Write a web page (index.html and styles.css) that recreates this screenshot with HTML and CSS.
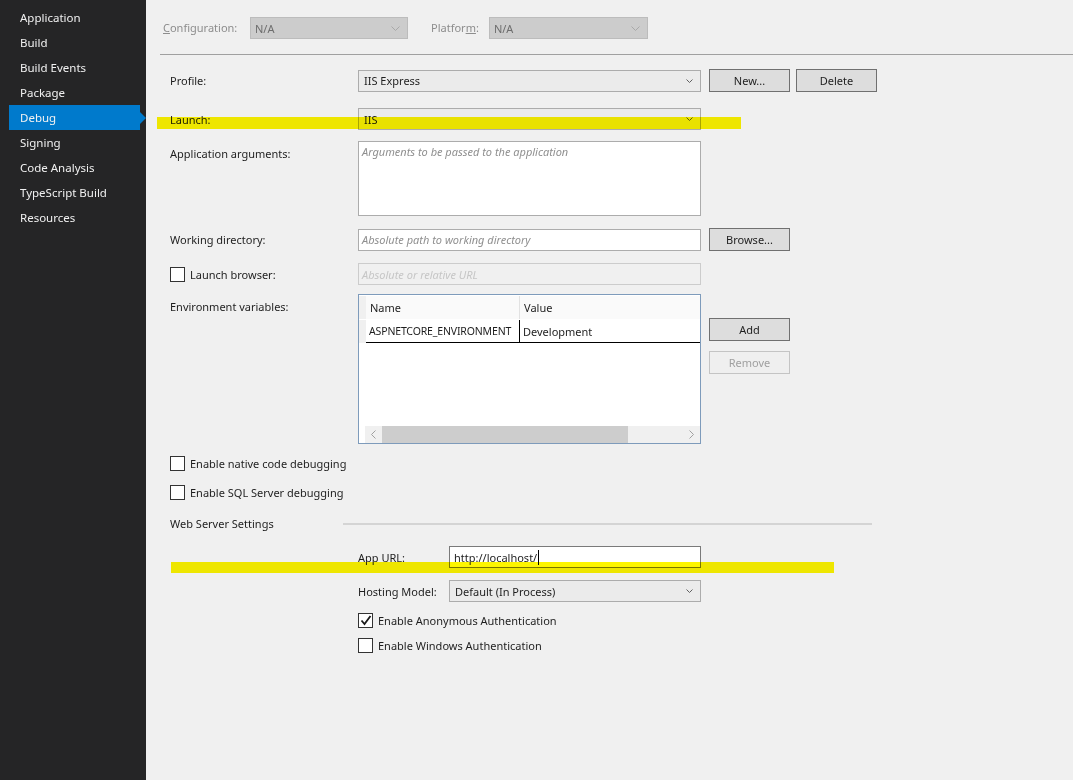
FILE: index.html
```html
<!DOCTYPE html>
<html lang="en">
<head>
  <meta charset="UTF-8" />
  <title>Project Properties - Debug</title>
  <link rel="stylesheet" href="styles.css">
</head>
<body>
  <div class="app">
    <nav class="sidebar">
      <div class="nav-item">Application</div>
      <div class="nav-item">Build</div>
      <div class="nav-item">Build Events</div>
      <div class="nav-item">Package</div>
      <div class="nav-item active">Debug</div>
      <div class="nav-item">Signing</div>
      <div class="nav-item">Code Analysis</div>
      <div class="nav-item">TypeScript Build</div>
      <div class="nav-item">Resources</div>
    </nav>

    <main class="page">
      <div class="config-bar">
        <span class="bar-label"><u>C</u>onfiguration:</span>
        <div class="combo combo-disabled combo-config">
          <span>N/A</span>
          <svg class="chev chev-big" width="9" height="5" viewBox="0 0 9 5"><path d="M0.5 0.5 L4.5 4.5 L8.5 0.5" /></svg>
        </div>
        <span class="bar-label bar-label-platform">Platfor<u>m</u>:</span>
        <div class="combo combo-disabled combo-platform">
          <span>N/A</span>
          <svg class="chev chev-big" width="9" height="5" viewBox="0 0 9 5"><path d="M0.5 0.5 L4.5 4.5 L8.5 0.5" /></svg>
        </div>
      </div>

      <div class="form">
        <div class="row row-profile">
          <label class="lbl">Profile:</label>
          <div class="combo ctl">
            <span>IIS Express</span>
            <svg class="chev" width="7" height="4" viewBox="0 0 7 4"><path d="M0.5 0.5 L3.5 3.5 L6.5 0.5" /></svg>
          </div>
          <button class="btn btn-first">New...</button>
          <button class="btn btn-second">Delete</button>
        </div>

        <div class="row row-launch">
          <label class="lbl">Launch:</label>
          <div class="combo ctl">
            <span>IIS</span>
            <svg class="chev" width="7" height="4" viewBox="0 0 7 4"><path d="M0.5 0.5 L3.5 3.5 L6.5 0.5" /></svg>
          </div>
        </div>

        <div class="row row-args">
          <label class="lbl">Application arguments:</label>
          <div class="textbox ctl textarea"><span class="hint">Arguments to be passed to the application</span></div>
        </div>

        <div class="row row-workdir">
          <label class="lbl">Working directory:</label>
          <div class="textbox ctl"><span class="hint">Absolute path to working directory</span></div>
          <button class="btn btn-first">Browse...</button>
        </div>

        <div class="row row-browser">
          <label class="lbl check-lbl"><span class="box"></span>Launch browser:</label>
          <div class="textbox ctl textbox-disabled"><span class="hint">Absolute or relative URL</span></div>
        </div>

        <div class="row row-env">
          <label class="lbl lbl-top">Environment variables:</label>
          <div class="grid ctl">
            <div class="grid-head">
              <span class="rh"></span>
              <span class="gcell gname">Name</span>
              <span class="gcell gvalue">Value</span>
            </div>
            <div class="grid-row">
              <span class="rh"></span>
              <span class="gcell gname">ASPNETCORE_ENVIRONMENT</span>
              <span class="gcell gvalue">Development</span>
            </div>
            <div class="grid-fill"></div>
            <div class="hscroll">
              <span class="sb-btn"><svg width="5" height="9" viewBox="0 0 5 9"><path d="M4.5 0.5 L0.5 4.5 L4.5 8.5" /></svg></span>
              <span class="sb-thumb"></span>
              <span class="sb-track"></span>
              <span class="sb-btn"><svg width="5" height="9" viewBox="0 0 5 9"><path d="M0.5 0.5 L4.5 4.5 L0.5 8.5" /></svg></span>
            </div>
          </div>
          <div class="env-buttons">
            <button class="btn">Add</button>
            <button class="btn btn-disabled">Remove</button>
          </div>
        </div>

        <div class="row row-check row-native">
          <label class="check-lbl"><span class="box"></span>Enable native code debugging</label>
        </div>
        <div class="row row-check row-sql">
          <label class="check-lbl"><span class="box"></span>Enable SQL Server debugging</label>
        </div>

        <div class="row row-section">
          <span class="section-title">Web Server Settings</span>
          <span class="section-line"></span>
        </div>

        <div class="row sub-row row-url">
          <label class="sub-lbl">App URL:</label>
          <div class="textbox sub-ctl textbox-focus"><span class="value">http://localhost/</span><span class="caret"></span></div>
        </div>

        <div class="row sub-row row-hosting">
          <label class="sub-lbl">Hosting Model:</label>
          <div class="combo sub-ctl">
            <span>Default (In Process)</span>
            <svg class="chev" width="7" height="4" viewBox="0 0 7 4"><path d="M0.5 0.5 L3.5 3.5 L6.5 0.5" /></svg>
          </div>
        </div>

        <div class="row sub-row row-check row-anon">
          <label class="check-lbl"><span class="box checked"><svg width="12" height="11" viewBox="0 0 12 11"><path d="M1.5 5.5 L4.5 9 L10.5 1" /></svg></span>Enable Anonymous Authentication</label>
        </div>
        <div class="row sub-row row-check row-win">
          <label class="check-lbl"><span class="box"></span>Enable Windows Authentication</label>
        </div>
      </div>

      <!-- highlighter marks -->
      <div class="marker marker-launch"></div>
      <div class="marker marker-url"></div>
    </main>
  </div>
</body>
</html>
```

FILE: styles.css
```css
html, body {
  margin: 0;
  padding: 0;
  height: 100%;
}

body {
  font-family: "Noto Sans", "Open Sans", sans-serif;
  font-size: 11px;
  color: #1e1e1e;
  background: #f0f0f0;
}

.app {
  display: flex;
  height: 100vh;
}

/* left navigation */
.sidebar {
  width: 146px;
  flex-shrink: 0;
  background: #252526;
  padding-top: 5px;
  box-sizing: border-box;
  font-size: 11.5px;
}

.nav-item {
  position: relative;
  height: 25px;
  line-height: 25px;
  margin-left: 9px;
  width: 131px;
  padding-left: 11px;
  box-sizing: border-box;
  color: #f1f1f1;
  white-space: nowrap;
}

.nav-item.active {
  background: #007acc;
}

.nav-item.active::after {
  content: "";
  position: absolute;
  right: -6px;
  top: 7px;
  border-left: 6px solid #007acc;
  border-top: 6px solid transparent;
  border-bottom: 6px solid transparent;
}

/* main page */
.page {
  position: relative;
  flex: 1;
  background: #f0f0f0;
}

.config-bar {
  display: flex;
  height: 55px;
  margin-left: 14px;
  padding: 17px 0 0 3px;
  border-bottom: 1px solid #a0a0a0;
  box-sizing: border-box;
  align-items: flex-start;
}

.bar-label {
  color: #8d8d8d;
  width: 87px;
  line-height: 22px;
}

.bar-label-platform {
  width: auto;
  margin-left: 23px;
  margin-right: 10px;
}

.combo {
  display: flex;
  align-items: center;
  justify-content: space-between;
  height: 22px;
  box-sizing: border-box;
  border: 1px solid #acacac;
  background: #ebebeb;
  padding: 0 7px 0 5px;
}

.combo-disabled {
  background: #cccccc;
  border-color: #bcbcbc;
  color: #6d6d6d;
  padding-left: 4px;
}

.combo-config { width: 158px; }
.combo-platform { width: 159px; }

.chev {
  fill: none;
  stroke: #606060;
  stroke-width: 1;
}

.chev-big {
  stroke: #a8a8a8;
}

/* form rows */
.form {
  padding-left: 24px;
}

.row {
  display: flex;
  align-items: center;
}

.lbl {
  width: 188px;
  flex-shrink: 0;
}

.lbl-top {
  align-self: flex-start;
  padding-top: 5px;
}

.ctl {
  width: 343px;
  flex-shrink: 0;
}

.row-profile { margin-top: 14px; }
.row-launch { margin-top: 16px; }
.row-args { margin-top: 11px; align-items: flex-start; }
.row-args .lbl { padding-top: 5px; }
.row-workdir { margin-top: 12px; }
.row-browser { margin-top: 12px; }
.row-env { margin-top: 9px; align-items: flex-start; }
.row-native { margin-top: 8px; }
.row-sql { margin-top: 7px; }
.row-section { margin-top: 13px; }
.row-url { margin-top: 15px; }
.row-hosting { margin-top: 12px; }
.row-anon { margin-top: 7px; }
.row-win { margin-top: 3px; }

.row-check {
  height: 22px;
}

.btn {
  width: 81px;
  height: 23px;
  font: inherit;
  color: #1e1e1e;
  background: #dddddd;
  border: 1px solid #707070;
  padding: 0;
}

.btn-first { margin-left: 8px; }
.btn-second { margin-left: 6px; }

.btn-disabled {
  background: #efefef;
  border-color: #c4c4c4;
  color: #a0a0a0;
}

.textbox {
  height: 22px;
  box-sizing: border-box;
  border: 1px solid #acacac;
  background: #ffffff;
  padding: 0 3px;
  display: flex;
  align-items: center;
}

.textarea {
  height: 75px;
  align-items: flex-start;
  padding-top: 2px;
}

.hint {
  font-style: italic;
  color: #8f8f8f;
}

.textbox-disabled {
  background: #f0f0f0;
  border-color: #cccccc;
}

.textbox-disabled .hint {
  color: #c6c6c6;
}

.textbox-focus {
  border-color: #7a7a7a;
  padding-left: 4px;
}

.caret {
  display: inline-block;
  width: 1px;
  height: 15px;
  background: #000000;
  margin-left: 1px;
}

/* checkboxes */
.check-lbl {
  display: flex;
  align-items: center;
  white-space: nowrap;
}

.box {
  width: 13px;
  height: 13px;
  border: 1px solid #333333;
  background: #ffffff;
  margin-right: 5px;
  display: flex;
  align-items: center;
  justify-content: center;
}

.box svg {
  fill: none;
  stroke: #1a1a1a;
  stroke-width: 1.8;
}

/* environment variables grid */
.grid {
  height: 150px;
  box-sizing: border-box;
  border: 1px solid #7e9bbb;
  background: #ffffff;
  display: flex;
  flex-direction: column;
  padding-top: 1px;
}

.grid-head,
.grid-row {
  display: flex;
  height: 23px;
}

.grid-head {
  background: #fafafa;
}

.rh {
  width: 7px;
  flex-shrink: 0;
  background: #f0f0f0;
}

.gcell {
  display: flex;
  align-items: center;
  box-sizing: border-box;
  white-space: nowrap;
}

.gname {
  width: 153px;
  flex-shrink: 0;
  padding-left: 4px;
}

.gvalue {
  flex: 1;
  padding-left: 4px;
}

.grid-head .gvalue {
  border-left: 1px solid #e2e2e2;
}

.grid-row {
  margin-top: 1px;
}

.grid-row .gname,
.grid-row .gvalue {
  border-bottom: 1px solid #000000;
  padding-left: 3px;
}

.grid-row .gname {
  font-size: 10.5px;
  letter-spacing: -0.15px;
}

.grid-row .gvalue {
  border-left: 1px solid #000000;
}

.grid-fill {
  flex: 1;
}

.hscroll {
  display: flex;
  height: 17px;
  margin-left: 6px;
  background: #f0f0f0;
}

.sb-btn {
  width: 17px;
  display: flex;
  align-items: center;
  justify-content: center;
}

.sb-btn svg {
  fill: none;
  stroke: #a0a0a0;
}

.sb-thumb {
  width: 246px;
  background: #cdcdcd;
}

.sb-track {
  flex: 1;
}

.env-buttons {
  display: flex;
  flex-direction: column;
  gap: 10px;
  margin-left: 8px;
  margin-top: 24px;
}

/* web server settings */
.section-title {
  width: 173px;
  flex-shrink: 0;
}

.section-line {
  width: 529px;
  height: 2px;
  background: #d4d4d4;
}

.sub-row {
  padding-left: 188px;
}

.sub-lbl {
  width: 91px;
  flex-shrink: 0;
}

.sub-ctl {
  width: 252px;
  flex-shrink: 0;
}

/* highlighter marks drawn on top */
.marker {
  position: absolute;
  background: #fdf500;
  mix-blend-mode: multiply;
}

.marker-launch {
  left: 11px;
  top: 117px;
  width: 584px;
  height: 12px;
}

.marker-url {
  left: 25px;
  top: 562px;
  width: 663px;
  height: 11px;
}
```
